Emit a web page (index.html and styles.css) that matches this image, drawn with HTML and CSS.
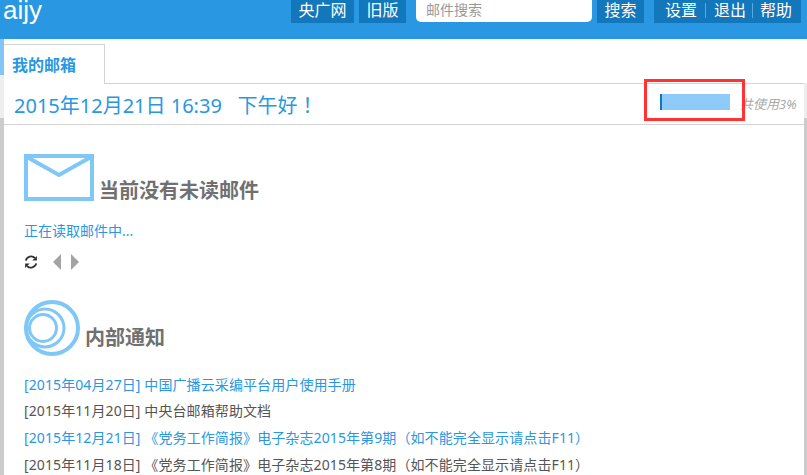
FILE: index.html
```html
<!DOCTYPE html>
<html lang="zh">
<head>
<meta charset="utf-8">
<title>我的邮箱</title>
<link rel="stylesheet" href="styles.css">
</head>
<body>
<header class="topbar">
  <div class="logo">aijy</div>
  <nav class="topnav">
    <a class="navbtn wide">央广网</a>
    <a class="navbtn narrow">旧版</a>
    <div class="searchbox">邮件搜索</div>
    <a class="navbtn narrow">搜索</a>
    <div class="navgroup">
      <a class="groupitem">设置</a>
      <a class="groupitem">退出</a>
      <a class="groupitem">帮助</a>
    </div>
  </nav>
</header>
<div class="shell">
  <aside class="leftrail">
    <div class="rail-a"></div>
    <div class="rail-b"></div>
    <div class="rail-c"></div>
  </aside>
  <main class="main">
    <div class="tabs"><div class="tab">我的邮箱</div></div>
    <div class="greeting">
      <div class="greet-text">2015年12月21日 16:39&nbsp;&nbsp;&nbsp;下午好<span class="p" lang="zh-TW">！</span></div>
      <div class="quota">
        <div class="quota-bar"><div class="quota-fill" style="width:3%"></div></div>
        <div class="quota-text">共使用3%</div>
        <div class="redbox"></div>
      </div>
    </div>
    <section class="content">
      <div class="heading mail-heading">
        <svg class="mail-icon" width="70" height="47" viewBox="0 0 70 47">
          <rect x="2" y="2" width="66" height="43" fill="#fff" stroke="#7fc7f7" stroke-width="4"/>
          <path d="M3 3 L35 21 L67 3" fill="none" stroke="#7fc7f7" stroke-width="4"/>
        </svg>
        <h2 class="title">当前没有未读邮件</h2>
      </div>
      <div class="loading">正在读取邮件中...</div>
      <div class="tools">
        <svg class="refresh" width="14" height="14" viewBox="0 0 14 14">
          <path d="M1.8 5.6 A5.3 5.3 0 0 1 11 3.2" fill="none" stroke="#333" stroke-width="1.8"/>
          <path d="M12.9 1 V5.6 H8.3 Z" fill="#333"/>
          <path d="M12.2 8.4 A5.3 5.3 0 0 1 3 10.8" fill="none" stroke="#333" stroke-width="1.8"/>
          <path d="M1.1 13 V8.4 H5.7 Z" fill="#333"/>
        </svg>
        <svg class="arrows" width="28" height="16" viewBox="0 0 28 16">
          <path d="M9 0 V16 L1 8 Z" fill="#a3a3a3"/>
          <path d="M19 0 V16 L27 8 Z" fill="#a3a3a3"/>
        </svg>
      </div>
      <div class="heading notice-heading">
        <svg class="notice-icon" width="56" height="56" viewBox="0 0 56 56">
          <circle cx="28" cy="28" r="26" fill="none" stroke="#7fc7f7" stroke-width="4"/>
          <circle cx="21" cy="28" r="19" fill="none" stroke="#7fc7f7" stroke-width="3"/>
          <circle cx="19" cy="28" r="13.5" fill="none" stroke="#7fc7f7" stroke-width="3"/>
        </svg>
        <h2 class="title">内部通知</h2>
      </div>
      <ul class="notices">
        <li class="link">[2015年04月27日] 中国广播云采编平台用户使用手册</li>
        <li>[2015年11月20日] 中央台邮箱帮助文档</li>
        <li class="link">[2015年12月21日] <span class="p" lang="zh-TW">《</span>党务工作简报<span class="p" lang="zh-TW">》</span>电子杂志2015年第9期<span class="p" lang="zh-TW">（</span>如不能完全显示请点击F11<span class="p" lang="zh-TW">）</span></li>
        <li>[2015年11月18日] <span class="p" lang="zh-TW">《</span>党务工作简报<span class="p" lang="zh-TW">》</span>电子杂志2015年第8期<span class="p" lang="zh-TW">（</span>如不能完全显示请点击F11<span class="p" lang="zh-TW">）</span></li>
      </ul>
    </section>
  </main>
  <aside class="rightrail">
    <div class="rr-a"></div>
    <div class="rr-b"></div>
    <div class="rr-c"></div>
  </aside>
</div>
</body>
</html>
```
FILE: styles.css
```css
* { box-sizing: border-box; }
html, body { margin: 0; height: 100%; overflow: hidden; background: #fff; }
body {
  display: flex;
  flex-direction: column;
  font-family: "Noto Sans", "Noto Sans CJK SC", sans-serif;
  font-size: 14px;
  color: #555;
}
.p { font-family: "Noto Sans CJK TC", sans-serif; }
.topbar {
  flex: none;
  height: 39px;
  background: #2997e2;
  display: flex;
  justify-content: space-between;
  padding: 0 6px 0 3px;
}
.logo {
  font-family: "Liberation Sans", sans-serif;
  font-size: 26px;
  line-height: 21px;
  color: #fff;
}
.topnav { display: flex; align-items: flex-start; }
.navbtn {
  height: 23px;
  line-height: 20px;
  background: #1277bb;
  color: #fff;
  font-size: 16px;
  text-align: center;
}
.wide { width: 63px; margin-right: 5px; }
.narrow { width: 47px; }
.searchbox {
  width: 176px;
  height: 22px;
  margin: 0 5px 0 10px;
  padding-left: 10px;
  background: #fff;
  border-radius: 0 0 5px 5px;
  color: #999;
  font-size: 14px;
  line-height: 19px;
}
.navgroup {
  display: flex;
  align-items: center;
  width: 147px;
  height: 23px;
  margin-left: 10px;
  padding: 0 9px 3px 11px;
  background: #1277bb;
}
.groupitem {
  color: #fff;
  font-size: 16px;
  line-height: 20px;
  padding-right: 8px;
}
.groupitem + .groupitem {
  border-left: 1px solid #5aa9dd;
  height: 15px;
  line-height: 15px;
  padding-left: 8px;
}
.groupitem:nth-child(2) { padding-right: 6px; }
.groupitem:last-child { padding-left: 7px; padding-right: 0; }
.shell { flex: 1; min-height: 0; display: flex; }
.leftrail, .rightrail { flex: none; display: flex; flex-direction: column; }
.leftrail { width: 4px; }
.rail-a { height: 36px; background: #83c5f5; }
.rail-b { height: 43px; background: #eee; }
.rail-c { flex: 1; background: #ccc; }
.rightrail { width: 3px; }
.rr-a { height: 44px; background: #fff; }
.rr-b { height: 35px; background: #eee; }
.rr-c { flex: 1; background: #ccc; }
.main { flex: 1; min-width: 0; display: flex; flex-direction: column; overflow: hidden; }
.tabs {
  flex: none;
  height: 45px;
  padding-top: 5px;
  border-bottom: 1px solid #d4d4d4;
  display: flex;
}
.tab {
  width: 101px;
  height: 40px;
  border: 1px solid #d4d4d4;
  border-left: 0;
  border-bottom: 0;
  background: #fff;
  padding-left: 8px;
  color: #2997e2;
  font-size: 16px;
  font-weight: 700;
  line-height: 41px;
}
.greeting {
  flex: none;
  height: 41px;
  padding: 0 9px 0 10px;
  border-bottom: 1px solid #d4d4d4;
  display: flex;
  align-items: center;
  justify-content: space-between;
}
.greet-text { color: #2997e2; font-size: 20px; line-height: 36px; margin-top: 2px; }
.quota { position: relative; display: flex; align-items: center; }
.quota-bar { width: 70px; height: 16px; background: #8ecbf9; margin: 0 10px 4px 0; }
.quota-fill { height: 100%; background: #1277bb; }
.quota-text { width: 55px; color: #aaa; font-size: 13px; font-style: italic; line-height: 16px; white-space: nowrap; }
.redbox {
  position: absolute;
  left: -16px;
  top: -15px;
  width: 101px;
  height: 42px;
  border: 3px solid #f33;
}
.content { padding: 29px 0 0 20px; }
.heading { display: flex; align-items: flex-end; }
.title { margin: 0; color: #707070; font-size: 20px; font-weight: 700; line-height: 28px; }
.mail-icon { display: block; margin-right: 5px; }
.mail-heading .title { margin-bottom: -4px; }
.notice-heading .title { margin-bottom: 4px; }
.loading { color: #2997e2; font-size: 14px; line-height: 18px; margin-top: 21px; }
.tools { display: flex; align-items: center; margin-top: 14px; height: 16px; }
.refresh { display: block; margin-right: 14px; }
.arrows { display: block; }
.notice-heading { margin-top: 30px; }
.notice-icon { display: block; margin-right: 5px; }
.notices { list-style: none; margin: 16px 0 0; padding: 0; }
.notices li { line-height: 26px; white-space: nowrap; color: #555; letter-spacing: 0.1px; }
.notices .link { color: #2997e2; }
```
